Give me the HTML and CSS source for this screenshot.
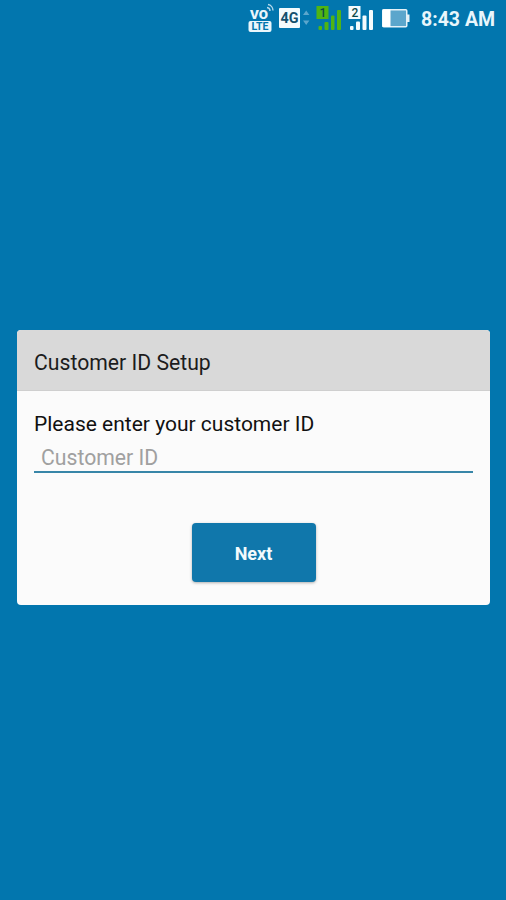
FILE: index.html
```html
<!DOCTYPE html>
<html lang="en">

<head>
    <meta charset="UTF-8">
    <meta name="viewport" content="width=device-width, initial-scale=1.0">
    <title>Customer ID Setup</title>
    <link rel="stylesheet" href="styles.css">
</head>

<body>
    <div class="status-bar">
        <svg class="icon-volte" width="26" height="32" viewBox="0 0 26 32">
            <text class="volte-vo" x="2" y="19" textLength="18" lengthAdjust="spacingAndGlyphs">VO</text>
            <path d="M19 7.5a3.5 3.5 0 0 1 3 3.5M20 4.5a6 6 0 0 1 5 6" fill="none" stroke="#b5d9ec" stroke-width="1.4" />
            <rect x="0.5" y="21" width="23" height="11" rx="2" fill="#eaf6fb" />
            <text class="volte-lte" x="3.5" y="30" textLength="17" lengthAdjust="spacingAndGlyphs">LTE</text>
        </svg>
        <svg class="icon-4g" width="32" height="32" viewBox="0 0 32 32">
            <rect x="0" y="8" width="21" height="20" rx="1" fill="#f4fbfd" />
            <text class="label-4g" x="1.5" y="23" textLength="18" lengthAdjust="spacingAndGlyphs">4G</text>
            <path d="M24 15l3.2-4.5 3.2 4.5zM24 20.5l3.2 4.5 3.2-4.5z" fill="#5ba6cc" />
        </svg>
        <svg class="icon-signal" width="26" height="32" viewBox="0 0 26 32">
            <g fill="#4fb414">
                <rect x="0.5" y="6" width="12" height="13" />
                <rect x="2.5" y="26" width="3.5" height="4" rx="1" />
                <rect x="8.5" y="22" width="4" height="8" rx="1" />
                <rect x="15" y="15.5" width="3.5" height="14.5" rx="1" />
                <rect x="21" y="10" width="4" height="20" rx="1" />
            </g>
            <text class="sim" x="3.5" y="17">1</text>
        </svg>
        <svg class="icon-signal" width="26" height="32" viewBox="0 0 26 32">
            <g fill="#f4fbfd">
                <rect x="0.5" y="6" width="12" height="13" />
                <rect x="2" y="26" width="3.5" height="4" rx="1" />
                <rect x="8" y="21.5" width="4" height="8.5" rx="1" />
                <rect x="14.5" y="15.5" width="4" height="14.5" rx="1" />
                <rect x="21" y="10" width="4" height="20" rx="1" />
            </g>
            <text class="sim" x="3.5" y="17">2</text>
        </svg>
        <svg class="icon-battery" width="28" height="32" viewBox="0 0 28 32">
            <rect x="0.75" y="9.75" width="24" height="17" rx="1" fill="#5ba6cc" stroke="#e3f1f8" stroke-width="1.5" />
            <rect x="0.5" y="9.5" width="8" height="17.5" fill="#fff" />
            <rect x="25" y="14.5" width="2.5" height="7.5" fill="#e3f1f8" />
        </svg>
        <span class="time">8:43 AM</span>
    </div>

    <div class="container">
        <form class="dialog">
            <h1>Customer ID Setup</h1>
            <div class="dialog-body">
                <label for="customer-id">Please enter your customer ID</label>
                <input type="text" id="customer-id" name="customer-id" placeholder="Customer ID">
                <button type="button">Next</button>
            </div>
        </form>
    </div>
</body>

</html>
```

FILE: styles.css
```css
* {
    box-sizing: border-box;
}

body {
    font-family: Roboto, sans-serif;
    margin: 0;
    height: 100vh;
    display: flex;
    flex-direction: column;
    background-color: #0276ae;
    overflow: hidden;
}

.status-bar {
    display: flex;
    height: 36px;
    padding-right: 11px;
    justify-content: flex-end;
    align-items: flex-start;
    color: #e9f6fc;
}

.icon-volte {
    margin-right: 5px;
}

.icon-4g {
    margin-right: 5px;
}

.icon-signal {
    margin-right: 6px;
}

.icon-battery {
    margin-left: 2px;
    margin-right: 11px;
}

.volte-vo {
    font-size: 13px;
    font-weight: 900;
    fill: #eaf6fb;
}

.volte-lte {
    font-size: 10px;
    font-weight: 700;
    fill: #0276ae;
}

.label-4g {
    font-size: 15px;
    font-weight: 700;
    fill: #14506e;
}

.sim {
    font-size: 12px;
    font-weight: 500;
    fill: #0b4a4a;
}

.time {
    width: 74px;
    font-size: 19.5px;
    font-weight: 700;
    line-height: 39px;
    white-space: nowrap;
}

.container {
    padding: 294px 16px 0 17px;
}

.dialog {
    height: 275px;
    border-radius: 4px;
    background-color: #fbfbfb;
    overflow: hidden;
}

h1 {
    height: 61px;
    margin: 0;
    padding-left: 17px;
    border-bottom: 1px solid #cfcfcf;
    background-color: #d9d9d9;
    color: #1c1c1c;
    font-size: 21.2px;
    font-weight: 400;
    line-height: 66px;
}

.dialog-body {
    display: flex;
    flex-direction: column;
    padding: 20px 17px 0;
}

label {
    color: #111;
    font-size: 21px;
    line-height: 27px;
}

input[type="text"] {
    height: 35px;
    padding: 5px 7px 0;
    border: none;
    border-bottom: 2px solid #3886a8;
    background: none;
    font-family: inherit;
    font-size: 21.2px;
    outline: none;
}

input::placeholder {
    color: #a0a0a0;
}

button {
    align-self: center;
    width: 124px;
    height: 59px;
    margin-top: 50px;
    padding: 2px 0 0;
    border: none;
    border-radius: 4px;
    background-color: #1077ab;
    box-shadow: 0 1px 3px rgba(0, 0, 0, 0.3);
    color: #f2fafd;
    font-family: inherit;
    font-size: 18px;
    font-weight: 700;
    cursor: pointer;
}
```
